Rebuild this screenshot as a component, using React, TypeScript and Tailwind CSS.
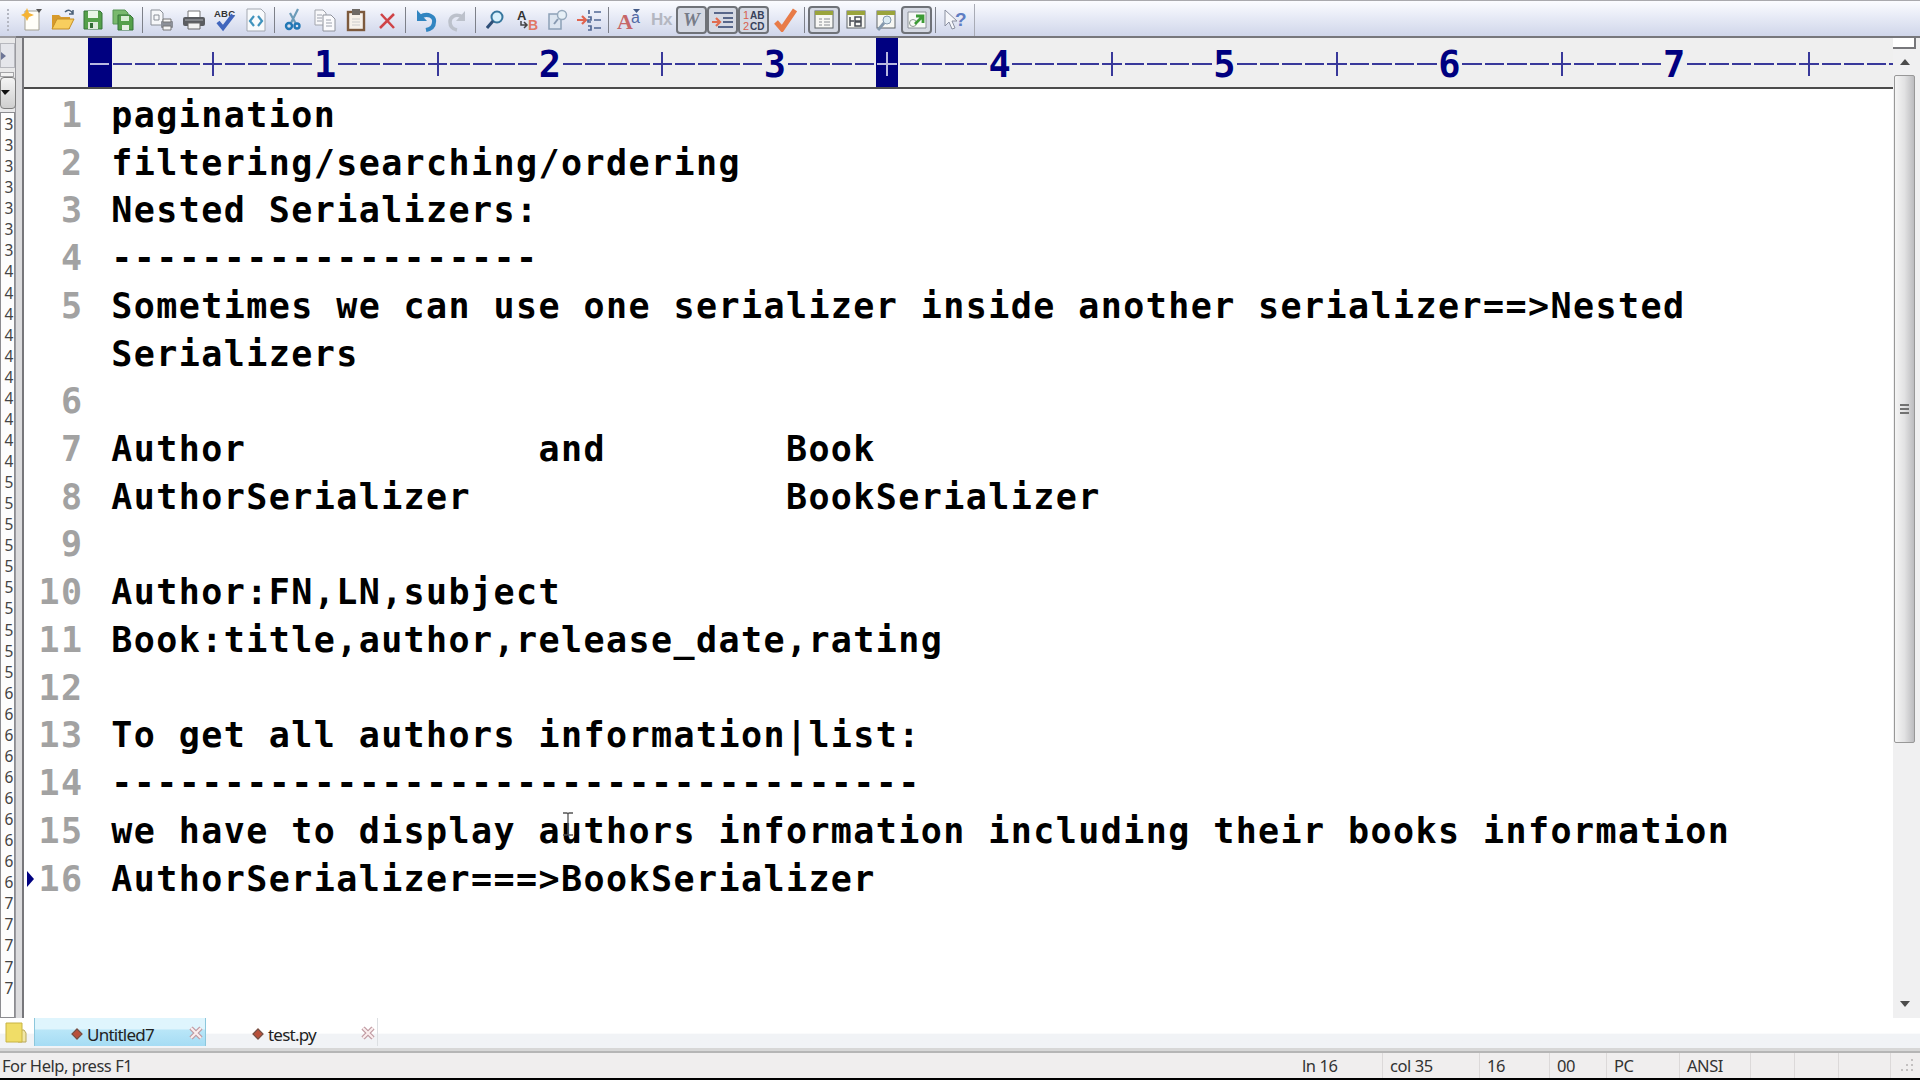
import React from "react";

const rows: [string, string][] = [
  ["1", "pagination"],
  ["2", "filtering/searching/ordering"],
  ["3", "Nested Serializers:"],
  ["4", "-------------------"],
  ["5", "Sometimes we can use one serializer inside another serializer==>Nested"],
  ["", "Serializers"],
  ["6", ""],
  ["7", "Author             and        Book"],
  ["8", "AuthorSerializer              BookSerializer"],
  ["9", ""],
  ["10", "Author:FN,LN,subject"],
  ["11", "Book:title,author,release_date,rating"],
  ["12", ""],
  ["13", "To get all authors information|list:"],
  ["14", "------------------------------------"],
  ["15", "we have to display authors information including their books information"],
  ["16", "AuthorSerializer===>BookSerializer"],
];

const side = [..."3".repeat(7), ..."4".repeat(10), ..."5".repeat(10), ..."6".repeat(10), ..."7".repeat(5)];

function Ico({ w = 20, children }: { w?: number; children: React.ReactNode }) {
  return (
    <svg width={w} height="24" viewBox={`0 0 ${w} 24`} fill="none" className="shrink-0">
      {children}
    </svg>
  );
}

function Slot({ w, on, children }: { w: number; on?: boolean; children?: React.ReactNode }) {
  return (
    <div
      className={
        "flex h-[28px] shrink-0 items-center justify-center " +
        (on ? "rounded-[4px] border-2 border-[#6f7278] bg-[#d5d9e3]" : "")
      }
      style={{ width: w }}
    >
      {children}
    </div>
  );
}

function Sep({ w = 10 }: { w?: number }) {
  return (
    <div className="flex h-[26px] shrink-0 justify-center" style={{ width: w }}>
      <div className="w-px bg-[#7d8089]" />
    </div>
  );
}

function Win({ children }: { children: React.ReactNode }) {
  return (
    <Ico>
      <rect x="1" y="3" width="18" height="17" fill="#f7f7f4" stroke="#5f6468" />
      <rect x="1" y="3" width="18" height="4" fill="#9aa43c" />
      {children}
    </Ico>
  );
}

function Toolbar() {
  return (
    <div className="flex h-[36px] shrink-0 items-center border-t border-[#a9a9ad] bg-linear-to-b from-[#fbfcff] via-[#e3e7f4] via-55% to-[#d0d6ea] pt-[3px]">
      <div className="flex h-full w-[975px] items-center border-r border-[#a8abb5]">
        <div className="flex w-[16px] flex-col items-center gap-[2px]">
          {[0, 1, 2, 3, 4, 5].map((i) => (
            <div key={i} className="h-[2px] w-[2px] bg-[#b4b7c2]" />
          ))}
        </div>
        <Slot w={31}>
          <Ico w={22}>
            <path d="M4 3h14v19H4z" fill="#fffef8" stroke="#a3a091" />
            <path d="M6 0l2 5 5 2-5 2-2 4-2-4-4-2 4-2z" fill="#f5b335" />
            <path d="M15 1h6l-3 4z" fill="#555" />
          </Ico>
        </Slot>
        <Slot w={31}>
          <Ico w={24}>
            <path d="M1 21V7h7l2 2h9v12z" fill="#d79a2c" />
            <path d="M1 21l5-10h17l-5 10z" fill="#f8ce5e" stroke="#c48e26" />
            <path d="M14 4c3-3 6-2 8 2m0-4v4h-4" stroke="#4b6078" strokeWidth="1.5" />
          </Ico>
        </Slot>
        <Slot w={30}>
          <Ico>
            <path d="M1 3h16l2 2v16H1z" fill="#55a04b" stroke="#37753a" />
            <path d="M5 3h10v7H5z" fill="#eaf6e8" />
            <path d="M5 14h10v7H5z" fill="#dfeadc" />
            <path d="M7 15h3v5H7z" fill="#336b35" />
          </Ico>
        </Slot>
        <Slot w={30}>
          <Ico w={22}>
            <path d="M1 2h12l3 3v11H1z" fill="#79b96d" stroke="#569455" />
            <path d="M6 7h12l3 3v12H6z" fill="#55a04b" stroke="#37753a" />
            <path d="M9 8h8v5H9z" fill="#d9eed4" />
            <path d="M10 17h7v5h-7z" fill="#e6f0e4" />
          </Ico>
        </Slot>
        <Sep w={8} />
        <Slot w={32}>
          <Ico w={24}>
            <path d="M1 2h9l3 3v12H1z" fill="#f6f7f9" stroke="#8a8f97" />
            <path d="M4 7h5v5H4z" stroke="#8a8f97" />
            <rect x="11" y="13" width="12" height="7" rx="1" fill="#8c9098" />
            <path d="M13 11h8v3h-8zM13 18h8v4h-8z" fill="#f5f5f5" stroke="#777" />
          </Ico>
        </Slot>
        <Slot w={31}>
          <Ico w={24}>
            <path d="M6 3h12v7H6z" fill="#fff" stroke="#777" />
            <rect x="1" y="9" width="22" height="9" rx="2" fill="#5a5c60" />
            <path d="M6 15h12v6H6z" fill="#f2f2f2" stroke="#666" />
            <path d="M3 12h18" stroke="#a8abb0" />
          </Ico>
        </Slot>
        <Slot w={31}>
          <Ico w={24}>
            <text x="1" y="9" fontSize="9.5" fontWeight="700" fontFamily="Liberation Sans" fill="#333" textLength="21">
              ABC
            </text>
            <path d="M5 14l5 6L20 7" stroke="#4166bd" strokeWidth="4" />
          </Ico>
        </Slot>
        <Slot w={31}>
          <Ico>
            <path d="M1 1h14l4 4v18H1z" fill="#f8fafc" stroke="#a3a8b1" />
            <path d="M8 8l-4 5 4 5M12 8l4 5-4 5" stroke="#3f93bd" strokeWidth="2.2" />
          </Ico>
        </Slot>
        <Sep w={6} />
        <Slot w={32}>
          <Ico>
            <path d="M15 1L8 15M7 5l6 11" stroke="#6c9cb9" strokeWidth="2.2" />
            <circle cx="6" cy="18" r="3" stroke="#2278b5" strokeWidth="2.4" />
            <circle cx="14" cy="18" r="2.5" stroke="#2278b5" strokeWidth="2.4" />
          </Ico>
        </Slot>
        <Slot w={32}>
          <Ico w={22}>
            <path d="M1 2h8l3 3v12H1z" fill="#f8f8fa" stroke="#a2a5ad" />
            <path d="M9 7h8l4 4v12H9z" fill="#fbfbfd" stroke="#8f939c" />
            <path d="M3 7h5M3 10h5M3 13h5M12 12h5M12 15h6M12 18h6" stroke="#9da2ad" />
          </Ico>
        </Slot>
        <Slot w={30}>
          <Ico>
            <rect x="2" y="4" width="16" height="18" fill="#f6f1ea" stroke="#7d5a3d" strokeWidth="2.4" />
            <rect x="6" y="1" width="8" height="6" fill="#6e6a66" />
            <path d="M6 11h8M6 14h8M6 17h8" stroke="#ccc" />
          </Ico>
        </Slot>
        <Slot w={31}>
          <Ico>
            <path d="M4 6l13 14M17 6L3 20" stroke="#cf4347" strokeWidth="2.5" />
          </Ico>
        </Slot>
        <Sep w={7} />
        <Slot w={33}>
          <Ico w={22}>
            <path d="M5 9c8-5 15 0 14 5 0 4-3 7-8 8" stroke="#3185c1" strokeWidth="4" />
            <path d="M2 2v11h10z" fill="#3185c1" />
          </Ico>
        </Slot>
        <Slot w={30}>
          <Ico w={20}>
            <path d="M16 9C8 5 3 9 3 14c0 4 2 7 7 8" stroke="#bcc1cb" strokeWidth="3.5" />
            <path d="M18 3v10H9z" fill="#bcc1cb" />
          </Ico>
        </Slot>
        <Sep w={6} />
        <Slot w={34}>
          <Ico w={18}>
            <circle cx="11" cy="9" r="5.5" fill="#d9f0fb" stroke="#37779e" strokeWidth="2" />
            <path d="M7 13l-6 7" stroke="#2f4f78" strokeWidth="3" />
          </Ico>
        </Slot>
        <Slot w={31}>
          <Ico w={24}>
            <text x="1" y="12" fontSize="13" fontWeight="700" fontFamily="Liberation Sans" fill="#333">A</text>
            <text x="12" y="22" fontSize="14" fontWeight="700" fontFamily="Liberation Sans" fill="#e07765">B</text>
            <path d="M5 13v4h6m-3-3l3 3-3 3" stroke="#444" strokeWidth="1.5" />
          </Ico>
        </Slot>
        <Slot w={30}>
          <Ico w={20}>
            <path d="M1 6h12v15H1z" fill="#dce5f0" stroke="#8ca0b6" strokeWidth="1.5" />
            <circle cx="14" cy="7" r="4.5" fill="#e7f0f7" stroke="#96a9bc" strokeWidth="1.5" />
            <path d="M10 11l-4 5" stroke="#8799b0" strokeWidth="2" />
          </Ico>
        </Slot>
        <Slot w={32}>
          <Ico w={24}>
            <path d="M0 12h8M5 8l4 4-4 4" stroke="#e06450" strokeWidth="2.2" />
            <path d="M12 2v4M11 9h3v3h-3v2h3M11 18h3v4h-3M17 4h7M17 12h7M17 20h7" stroke="#526894" strokeWidth="1.7" />
          </Ico>
        </Slot>
        <Sep w={6} />
        <Slot w={36}>
          <Ico w={26}>
            <text x="1" y="21" fontSize="22" fontWeight="700" fontFamily="Liberation Serif" fill="#c66668">A</text>
            <text x="15" y="15" fontSize="16" fontFamily="Liberation Sans" fill="#5268a4">a</text>
            <path d="M17 1h7l-3.5 4z" fill="#445b88" />
          </Ico>
        </Slot>
        <Slot w={29}>
          <span className="font-['Liberation_Sans'] text-[17px] leading-[20px] font-bold tracking-tight text-[#b4b7c1]">Hx</span>
        </Slot>
        <Slot w={31} on>
          <span className="font-['Liberation_Serif'] text-[19px] leading-[24px] font-bold text-[#777c88] italic">W</span>
        </Slot>
        <Slot w={31} on>
          <Ico w={22}>
            <path d="M2 5h19M11 10h10M11 14h10M6 19h15" stroke="#58678a" strokeWidth="2" />
            <path d="M0 14h7M4 10l4 4-4 4" stroke="#e16c4f" strokeWidth="2.2" />
          </Ico>
        </Slot>
        <Slot w={31} on>
          <Ico w={22}>
            <text x="0" y="11" fontSize="11" fontFamily="Liberation Sans" fill="#d8604f">1</text>
            <text x="0" y="22" fontSize="11" fontFamily="Liberation Sans" fill="#d8604f">2</text>
            <text x="7" y="11" fontSize="10" fontWeight="700" fontFamily="Liberation Sans" fill="#37415a">AB</text>
            <text x="7" y="22" fontSize="10" fontWeight="700" fontFamily="Liberation Sans" fill="#37415a">CD</text>
          </Ico>
        </Slot>
        <Slot w={32}>
          <Ico w={24}>
            <path d="M3 14l6 7L22 2" stroke="#e87b48" strokeWidth="5" />
          </Ico>
        </Slot>
        <Sep w={7} />
        <Slot w={32} on>
          <Win>
            <path d="M5 11h3M10 11h6M5 14h3M10 14h6M5 17h3M10 17h6" stroke="#888c92" />
          </Win>
        </Slot>
        <Slot w={31}>
          <Win>
            <path d="M4 9v9M4 13h4M9 9h6v4H9zM9 14h6v4H9z" stroke="#4a4e55" strokeWidth="1.5" />
          </Win>
        </Slot>
        <Slot w={30}>
          <Win>
            <circle cx="11" cy="12" r="4" fill="#dcebf3" stroke="#8197ac" />
            <path d="M8 15l-6 7" stroke="#8599ad" strokeWidth="3" />
          </Win>
        </Slot>
        <Slot w={31} on>
          <Ico w={22}>
            <path d="M2 4h18v16H2z" fill="#f8faf7" stroke="#8b9098" />
            <circle cx="7" cy="15" r="3.5" stroke="#8b9890" />
            <path d="M9 16l7-7M10 8h7v7" stroke="#3d9b36" strokeWidth="2.8" />
          </Ico>
        </Slot>
        <Sep w={6} />
        <Slot w={33}>
          <Ico w={24}>
            <path d="M2 2v16l4-4 3 7 3-1-3-7h5z" fill="#f5f6fa" stroke="#8b90a0" />
            <text x="12" y="18" fontSize="19" fontWeight="700" fontFamily="Liberation Sans" fill="#5f7dc3">?</text>
          </Ico>
        </Slot>
      </div>
    </div>
  );
}

const DIGITS = [9, 19, 29, 39, 49, 59, 69];
const TICKS = [4, 14, 24, 34, 44, 54, 64, 75];

function Ruler() {
  return (
    <div className="flex h-[51px] shrink-0 overflow-hidden border-b-2 border-[#4b4b4b] bg-[#efefef]">
      <div className="w-[64px] shrink-0" />
      <div className="flex w-[23.5px] shrink-0 items-center bg-[#000080] pt-[2px] pl-[2px]">
        <div className="h-[2px] w-[19px] bg-[#b9b9e0]" />
      </div>
      {Array.from({ length: 80 }, (_, i) => {
        if (DIGITS.includes(i))
          return (
            <div
              key={i}
              className="flex w-[22.485px] shrink-0 items-center justify-center pt-[4px] font-['DejaVu_Sans_Mono'] text-[37px] leading-none font-bold text-[#000080]"
            >
              {(i + 1) / 10}
            </div>
          );
        const on = i === 34;
        const line = on ? "bg-[#b9b9e0]" : "bg-[#38389a]";
        return (
          <div key={i} className={"grid w-[22.485px] shrink-0 place-items-center pt-[2px] " + (on ? "bg-[#000080]" : "")}>
            <div className={"col-start-1 row-start-1 h-[2px] w-[19.5px] " + line} />
            {TICKS.includes(i) && <div className={"col-start-1 row-start-1 h-[24px] w-[2px] " + line} />}
          </div>
        );
      })}
    </div>
  );
}

function Tri({ up }: { up?: boolean }) {
  return (
    <svg width="10" height="6" viewBox="0 0 10 6">
      <path d={up ? "M0 6h10L5 0z" : "M0 0h10L5 6z"} fill="#4c4c4c" />
    </svg>
  );
}

function Tab({ name, active }: { name: string; active?: boolean }) {
  return (
    <div
      className={
        "flex h-[28px] w-[172px] shrink-0 items-center border-r pr-[2px] " +
        (active
          ? "border-x border-[#8cc7dc] bg-linear-to-b from-[#dff5fd] from-40% via-[#b9e6f8] via-42% to-[#a5dcf4]"
          : "border-[#dcdfe2]")
      }
    >
      <div className="flex flex-1 items-center justify-center gap-[6px] pt-[4px] pl-[3px]">
        <div className="h-[8px] w-[8px] rotate-45 border border-[#6b5148] bg-[#b8503a]" />
        <span className="font-['Noto_Sans'] text-[17px] leading-none tracking-[-0.75px] text-[#222]">{name}</span>
      </div>
      <svg width="14" height="14" viewBox="0 0 14 14" className="mt-[2px]">
        <path d="M2 2l10 10M12 2L2 12" stroke="#c09aa2" strokeWidth="4.5" />
        <path d="M2 2l10 10M12 2L2 12" stroke="#fbeeee" strokeWidth="2" />
      </svg>
    </div>
  );
}

const cells: [number, string][] = [
  [88, "ln 16"],
  [97, "col 35"],
  [70, "16"],
  [57, "00"],
  [73, "PC"],
  [71, "ANSI"],
  [44, ""],
  [44, ""],
  [52, ""],
];

export default function App() {
  return (
    <div className="relative flex h-[1080px] w-[1920px] flex-col overflow-hidden bg-white">
      <Toolbar />
      <div className="flex h-[982px] shrink-0">
        <div className="flex w-[16px] shrink-0 flex-col border-t-2 border-r border-[#9b9ba0] bg-[#e9e9ea]">
          <div className="mt-[5px] flex h-[25px] w-[15px] items-center border border-[#b7b8be] bg-[#e5e6eb]">
            <svg width="6" height="10"><path d="M0 1l5 4-5 4z" fill="#6d7596" /></svg>
          </div>
          <div className="mt-[4px] h-[5px] w-[14px] border border-[#a5a5a8] bg-[#f2f2f2]" />
          <div className="flex h-[32px] w-[16px] items-center rounded-[4px] border border-[#7e7e7e] bg-linear-to-b from-[#f4f4f4] to-[#cfcfcf]">
            <svg width="10" height="6"><path d="M0 0h9L4 5z" fill="#111" /></svg>
          </div>
          <div className="mt-[3px] flex flex-1 flex-col items-center border border-[#8c8c90] bg-[#fdfdfd] pt-[1px] pl-[3px] font-['Noto_Sans'] text-[15.5px] text-[#444]">
            {side.map((d, i) => (
              <div key={i} className="h-[21.07px] shrink-0 leading-[21.07px]">{d}</div>
            ))}
          </div>
        </div>
        <div className="w-[8px] shrink-0 border-t-2 border-r-2 border-[#77777b] bg-[#dcdcde]" />
        <div className="flex w-[1869px] shrink-0 flex-col border-t-2 border-[#77777b]">
          <Ruler />
          <div className="pt-[3px] font-['DejaVu_Sans_Mono'] text-[35px] leading-[47.73px] font-bold tracking-[1.415px]">
            {rows.map(([n, t], i) => (
              <div key={i} className="flex h-[47.73px] whitespace-pre">
                <div className="flex w-[16px] shrink-0 items-center pl-[3px]">
                  {n === "16" && (
                    <svg width="8" height="16"><path d="M0 0l7 8-7 8z" fill="#000080" /></svg>
                  )}
                </div>
                <div className="flex w-[43.5px] shrink-0 justify-end text-[#a2a2a2]">{n}</div>
                <div className="pl-[27.8px] text-black">{t}</div>
              </div>
            ))}
          </div>
        </div>
        <div className="flex w-[27px] shrink-0 flex-col border-t-2 border-[#77777b] bg-[#f0f0f1] pr-[5px]">
          <div className="h-[11px] w-[23px] border-r-2 border-b-2 border-[#77777b] bg-white" />
          <div className="flex h-[26px] w-[24px] items-center justify-center"><Tri up /></div>
          <div className="ml-[1px] flex h-[668px] w-[21px] flex-col items-center justify-center gap-[2px] rounded-[2px] border border-[#989898] bg-linear-to-r from-[#f5f5f5] via-[#e2e2e3] to-[#bcbcbf]">
            {[0, 1, 2].map((i) => (
              <div key={i} className="h-[2px] w-[9px] bg-[#727272]" />
            ))}
          </div>
          <div className="flex w-[24px] flex-1 items-end justify-center pb-[11px]"><Tri /></div>
        </div>
      </div>
      <div className="flex h-[30px] shrink-0 items-start bg-linear-to-b from-white from-50% to-[#f1f3f6] to-55%">
        <div className="flex w-[34px] justify-center pt-[4px] pr-[3px]">
          <svg width="22" height="22" viewBox="0 0 22 22">
            <path d="M13 8h6l2 3v9h-8z" fill="#f1e7a6" stroke="#b8a75b" />
            <path d="M1 1h16v19H1z" fill="#f0dd67" stroke="#c8b444" />
          </svg>
        </div>
        <Tab name="Untitled7" active />
        <Tab name="test.py" />
      </div>
      <div className="h-[5px] shrink-0 border-b-2 border-[#b5b5b5] bg-[#d7d7d7]" />
      <div className="flex h-[25px] shrink-0 items-center bg-[#f0eeee] font-['Noto_Sans'] text-[16.5px] tracking-[-0.45px] text-[#333]">
        <div className="w-[1295px] pt-[2px] pl-[2px]">For Help, press F1</div>
        {cells.map(([w, t], i) => (
          <div
            key={i}
            className="flex h-full shrink-0 items-center border-r border-[#dcd9d9] pt-[2px] pl-[7px]"
            style={{ width: w }}
          >
            {t}
          </div>
        ))}
        <svg width="22" height="22" viewBox="0 0 22 22" className="ml-[6px]">
          <path d="M14 4h2v2h-2zM14 9h2v2h-2zM9 9h2v2H9zM14 14h2v2h-2zM9 14h2v2H9zM4 14h2v2H4z" fill="#c3c0c0" />
        </svg>
      </div>
      <div className="flex-1 bg-black" />
      <svg className="absolute top-[812px] left-[562px]" width="12" height="24" viewBox="0 0 12 24">
        <path d="M1 1h4l1 1 1-1h4M6 2v20M1 23h4l1-1 1 1h4" fill="none" stroke="#555" strokeWidth="1.3" />
      </svg>
    </div>
  );
}
